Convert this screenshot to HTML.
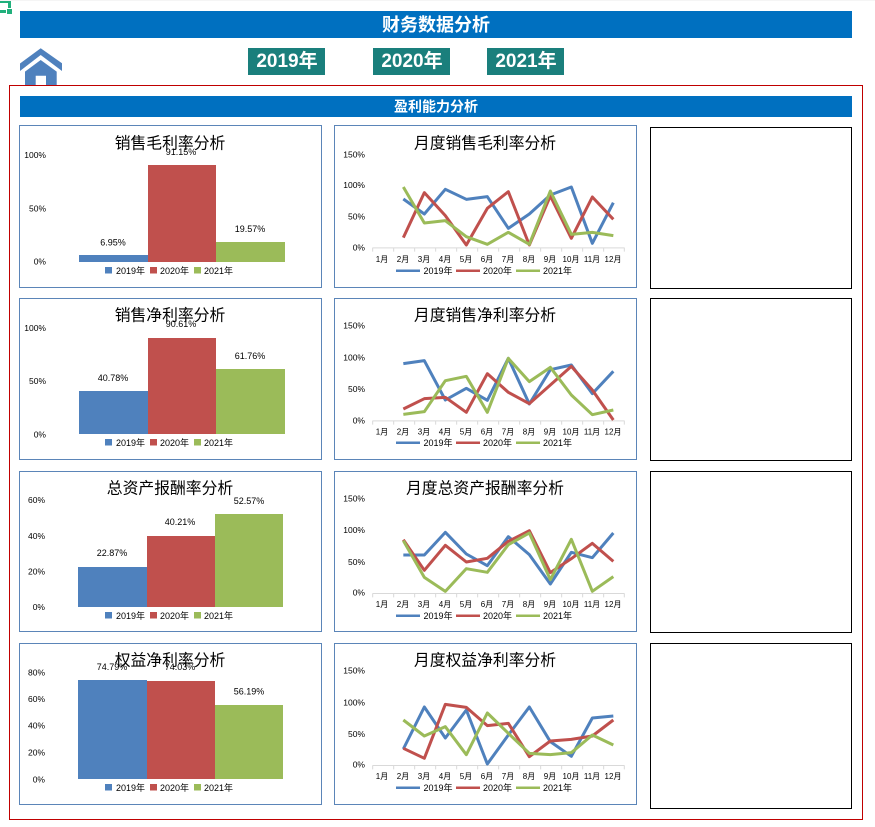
<!DOCTYPE html>
<html lang="zh">
<head>
<meta charset="utf-8">
<title>财务数据分析</title>
<style>
html,body{margin:0;padding:0;background:#fff;width:875px;height:827px;overflow:hidden}
svg{display:block;position:absolute;left:0;top:0}
text{font-family:"Liberation Sans","Noto Sans CJK SC",sans-serif;fill:#000}
.a{font-size:8.5px;text-anchor:end;dominant-baseline:central}
.c{font-size:9px;text-anchor:middle;dominant-baseline:central}
.m{font-size:8px;text-anchor:middle;dominant-baseline:central}
.l{font-size:9px;dominant-baseline:central}
.t{font-size:15.8px;text-anchor:middle;dominant-baseline:central}
.w{fill:#fff;font-weight:bold;text-anchor:middle;dominant-baseline:central}
.box{fill:none;stroke:#5b85b8;stroke-width:1}
.blk{fill:none;stroke:#000;stroke-width:1}
.p{fill:none;stroke-width:9;stroke-linejoin:round;stroke-linecap:butt}
.ax{fill:none;stroke:#d9d9d9;stroke-width:1}
</style>
</head>
<body>
<svg width="875" height="827" viewBox="0 0 875 827" xmlns="http://www.w3.org/2000/svg">
<rect x="0" y="0" width="875" height="1" fill="#f5f5f5"/>
<!-- corner mark -->
<rect x="0" y="1" width="11" height="2" fill="#21b07c"/>
<rect x="8" y="1" width="3" height="7" fill="#21b07c"/>
<rect x="0" y="10" width="6" height="3" fill="#21b07c"/>
<rect x="7" y="9" width="5" height="5" fill="#21b07c"/>

<!-- header -->
<rect x="20" y="11" width="832" height="27" fill="#0070c0"/>
<text class="w" x="436" y="25" style="font-size:18px">财务数据分析</text>

<!-- home -->
<path d="M40.7 48.300 L62 63.300 L62 71 L40.700 55 L20 71 L20 63.500 Z" fill="#4f81bd"/>
<path d="M25 71.600 L40.700 60 L56.700 71.600 L56.700 86 L46 86 L46 75.700 L35.700 75.700 L35.700 86 L25 86 Z" fill="#4f81bd"/>

<!-- year buttons -->
<rect x="248" y="48" width="77" height="27" fill="#1a7f7c"/>
<text class="w" x="287" y="61.500" style="font-size:19px">2019年</text>
<rect x="373" y="48" width="77" height="27" fill="#1a7f7c"/>
<text class="w" x="412" y="61.500" style="font-size:19px">2020年</text>
<rect x="487" y="48" width="77" height="27" fill="#1a7f7c"/>
<text class="w" x="526" y="61.500" style="font-size:19px">2021年</text>

<!-- outer red frame -->
<rect x="9.500" y="85.500" width="853" height="734" fill="none" stroke="#c00000" stroke-width="1"/>
<rect x="20" y="96" width="832" height="21" fill="#0070c0"/>
<text class="w" x="436" y="106.500" style="font-size:14px">盈利能力分析</text>

<!-- chart frames -->
<rect class="box" x="19.500" y="125.500" width="302" height="162"/>
<rect class="box" x="19.500" y="298.500" width="302" height="161"/>
<rect class="box" x="19.500" y="471.500" width="302" height="160"/>
<rect class="box" x="19.500" y="643.500" width="302" height="161"/>
<rect class="box" x="334.500" y="125.500" width="302" height="162"/>
<rect class="box" x="334.500" y="298.500" width="302" height="161"/>
<rect class="box" x="334.500" y="471.500" width="302" height="160"/>
<rect class="box" x="334.500" y="643.500" width="302" height="161"/>
<rect class="blk" x="650.500" y="127.500" width="201" height="161"/>
<rect class="blk" x="650.500" y="298.500" width="201" height="162"/>
<rect class="blk" x="650.500" y="471.500" width="201" height="161"/>
<rect class="blk" x="650.500" y="643.500" width="201" height="165"/>

<!-- BAR 1 -->
<rect x="79" y="255" width="69" height="7" fill="#4f81bd"/>
<rect x="148" y="165" width="68" height="97" fill="#c0504d"/>
<rect x="216" y="242" width="69" height="20" fill="#9bbb59"/>
<text class="t" x="170" y="144">销售毛利率分析</text>
<text class="a" x="46" y="155">100%</text>
<text class="a" x="46" y="208.500">50%</text>
<text class="a" x="46" y="261.500">0%</text>
<text class="c" x="113" y="242.500">6.95%</text>
<text class="c" x="181" y="152">91.15%</text>
<text class="c" x="250" y="229">19.57%</text>
<rect x="105" y="267" width="7" height="6.500" fill="#4f81bd"/><text class="l" x="116" y="271">2019年</text>
<rect x="150" y="267" width="7" height="6.500" fill="#c0504d"/><text class="l" x="160" y="271">2020年</text>
<rect x="194" y="267" width="7" height="6.500" fill="#9bbb59"/><text class="l" x="204" y="271">2021年</text>

<!-- BAR 2 -->
<rect x="79" y="391" width="69" height="43" fill="#4f81bd"/>
<rect x="148" y="338" width="68" height="96" fill="#c0504d"/>
<rect x="216" y="369" width="69" height="65" fill="#9bbb59"/>
<text class="t" x="170" y="316">销售净利率分析</text>
<text class="a" x="46" y="328">100%</text>
<text class="a" x="46" y="381">50%</text>
<text class="a" x="46" y="434.500">0%</text>
<text class="c" x="113" y="378">40.78%</text>
<text class="c" x="181" y="324">90.61%</text>
<text class="c" x="250" y="356">61.76%</text>
<rect x="105" y="439" width="7" height="6.500" fill="#4f81bd"/><text class="l" x="116" y="443">2019年</text>
<rect x="150" y="439" width="7" height="6.500" fill="#c0504d"/><text class="l" x="160" y="443">2020年</text>
<rect x="194" y="439" width="7" height="6.500" fill="#9bbb59"/><text class="l" x="204" y="443">2021年</text>

<!-- BAR 3 -->
<rect x="78" y="567" width="69" height="40" fill="#4f81bd"/>
<rect x="147" y="536" width="68" height="71" fill="#c0504d"/>
<rect x="215" y="514" width="68" height="93" fill="#9bbb59"/>
<text class="t" x="170" y="489">总资产报酬率分析</text>
<text class="a" x="45" y="500">60%</text>
<text class="a" x="45" y="536">40%</text>
<text class="a" x="45" y="571.500">20%</text>
<text class="a" x="45" y="607">0%</text>
<text class="c" x="112" y="553">22.87%</text>
<text class="c" x="180" y="522">40.21%</text>
<text class="c" x="249" y="501">52.57%</text>
<rect x="105" y="612" width="7" height="6.500" fill="#4f81bd"/><text class="l" x="116" y="616">2019年</text>
<rect x="150" y="612" width="7" height="6.500" fill="#c0504d"/><text class="l" x="160" y="616">2020年</text>
<rect x="194" y="612" width="7" height="6.500" fill="#9bbb59"/><text class="l" x="204" y="616">2021年</text>

<!-- BAR 4 -->
<rect x="78" y="680" width="69" height="99" fill="#4f81bd"/>
<rect x="147" y="681" width="68" height="98" fill="#c0504d"/>
<rect x="215" y="705" width="68" height="74" fill="#9bbb59"/>
<text class="t" x="170" y="661">权益净利率分析</text>
<text class="a" x="45" y="672.500">80%</text>
<text class="a" x="45" y="699">60%</text>
<text class="a" x="45" y="725.500">40%</text>
<text class="a" x="45" y="752.500">20%</text>
<text class="a" x="45" y="779.500">0%</text>
<text class="c" x="112" y="667">74.79%</text>
<text class="c" x="180" y="667">74.03%</text>
<text class="c" x="249" y="691.500">56.19%</text>
<rect x="105" y="784" width="7" height="6.500" fill="#4f81bd"/><text class="l" x="116" y="788">2019年</text>
<rect x="150" y="784" width="7" height="6.500" fill="#c0504d"/><text class="l" x="160" y="788">2020年</text>
<rect x="194" y="784" width="7" height="6.500" fill="#9bbb59"/><text class="l" x="204" y="788">2021年</text>

<!-- LINE 1 -->
<g transform="translate(330,120) scale(.33333)">
<path class="ax" style="stroke-width:3" d="M128 383.500H883M128 383V395M191 383V395M254 383V395M317 383V395M380 383V395M443 383V395M506 383V395M569 383V395M632 383V395M695 383V395M758 383V395M821 383V395M883 383V395"/>
<polyline class="p" stroke="#4f81bd" points="220,237 283,282 346,208 409,238 472,230 535,325 598,282 661,225 724,201 787,370 850,248"/>
<polyline class="p" stroke="#c0504d" points="220,353 283,218 346,287 409,375 472,265 535,215 598,375 661,228 724,355 787,231 850,298"/>
<polyline class="p" stroke="#9bbb59" points="220,201 283,309 346,302 409,350 472,373 535,337 598,373 661,213 724,343 787,337 850,347"/>
</g>
<text class="t" x="485" y="144">月度销售毛利率分析</text>
<text class="a" x="365" y="154.500">150%</text>
<text class="a" x="365" y="185">100%</text>
<text class="a" x="365" y="216.500">50%</text>
<text class="a" x="365" y="247.500">0%</text>
<text class="m" y="259"><tspan x="382">1月</tspan><tspan x="403">2月</tspan><tspan x="424">3月</tspan><tspan x="445">4月</tspan><tspan x="466">5月</tspan><tspan x="487">6月</tspan><tspan x="508">7月</tspan><tspan x="529">8月</tspan><tspan x="550">9月</tspan><tspan x="571">10月</tspan><tspan x="592">11月</tspan><tspan x="613">12月</tspan></text>
<rect x="396" y="269.500" width="24" height="2.500" fill="#4f81bd"/><text class="l" x="423.500" y="271">2019年</text>
<rect x="456" y="269.500" width="24" height="2.500" fill="#c0504d"/><text class="l" x="483" y="271">2020年</text>
<rect x="516" y="269.500" width="24" height="2.500" fill="#9bbb59"/><text class="l" x="543" y="271">2021年</text>

<!-- LINE 2 -->
<g transform="translate(330,295) scale(.33333)">
<path class="ax" style="stroke-width:3" d="M128 377.500H883M128 377V389M191 377V389M254 377V389M317 377V389M380 377V389M443 377V389M506 377V389M569 377V389M632 377V389M695 377V389M758 377V389M821 377V389M883 377V389"/>
<polyline class="p" stroke="#4f81bd" points="220,206 283,197 346,315 409,280 472,316 535,190 598,327 661,224 724,210 787,296 850,229"/>
<polyline class="p" stroke="#c0504d" points="220,342 283,311 346,307 409,352 472,236 535,292 598,326 661,270 724,214 787,285 850,375"/>
<polyline class="p" stroke="#9bbb59" points="220,358 283,350 346,257 409,244 472,352 535,190 598,260 661,217 724,300 787,359 850,345"/>
</g>
<text class="t" x="485" y="316">月度销售净利率分析</text>
<text class="a" x="365" y="325.500">150%</text>
<text class="a" x="365" y="357.500">100%</text>
<text class="a" x="365" y="389">50%</text>
<text class="a" x="365" y="420.500">0%</text>
<text class="m" y="431.500"><tspan x="382">1月</tspan><tspan x="403">2月</tspan><tspan x="424">3月</tspan><tspan x="445">4月</tspan><tspan x="466">5月</tspan><tspan x="487">6月</tspan><tspan x="508">7月</tspan><tspan x="529">8月</tspan><tspan x="550">9月</tspan><tspan x="571">10月</tspan><tspan x="592">11月</tspan><tspan x="613">12月</tspan></text>
<rect x="396" y="441.500" width="24" height="2.500" fill="#4f81bd"/><text class="l" x="423.500" y="443">2019年</text>
<rect x="456" y="441.500" width="24" height="2.500" fill="#c0504d"/><text class="l" x="483" y="443">2020年</text>
<rect x="516" y="441.500" width="24" height="2.500" fill="#9bbb59"/><text class="l" x="543" y="443">2021年</text>

<!-- LINE 3 -->
<g transform="translate(330,468) scale(.33333)">
<path class="ax" style="stroke-width:3" d="M128 376.500H883M128 376V388M191 376V388M254 376V388M317 376V388M380 376V388M443 376V388M506 376V388M569 376V388M632 376V388M695 376V388M758 376V388M821 376V388M883 376V388"/>
<polyline class="p" stroke="#4f81bd" points="220,261 283,261 346,193 409,258 472,293 535,206 598,260 661,348 724,253 787,269 850,195"/>
<polyline class="p" stroke="#c0504d" points="220,215 283,307 346,232 409,282 472,271 535,220 598,188 661,314 724,272 787,226 850,280"/>
<polyline class="p" stroke="#9bbb59" points="220,218 283,328 346,370 409,302 472,313 535,230 598,195 661,335 724,214 787,370 850,326"/>
</g>
<text class="t" x="485" y="489">月度总资产报酬率分析</text>
<text class="a" x="365" y="498.500">150%</text>
<text class="a" x="365" y="530">100%</text>
<text class="a" x="365" y="562">50%</text>
<text class="a" x="365" y="592.500">0%</text>
<text class="m" y="604"><tspan x="382">1月</tspan><tspan x="403">2月</tspan><tspan x="424">3月</tspan><tspan x="445">4月</tspan><tspan x="466">5月</tspan><tspan x="487">6月</tspan><tspan x="508">7月</tspan><tspan x="529">8月</tspan><tspan x="550">9月</tspan><tspan x="571">10月</tspan><tspan x="592">11月</tspan><tspan x="613">12月</tspan></text>
<rect x="396" y="614.500" width="24" height="2.500" fill="#4f81bd"/><text class="l" x="423.500" y="616">2019年</text>
<rect x="456" y="614.500" width="24" height="2.500" fill="#c0504d"/><text class="l" x="483" y="616">2020年</text>
<rect x="516" y="614.500" width="24" height="2.500" fill="#9bbb59"/><text class="l" x="543" y="616">2021年</text>

<!-- LINE 4 -->
<g transform="translate(330,640) scale(.33333)">
<path class="ax" style="stroke-width:3" d="M128 376.500H883M128 376V388M191 376V388M254 376V388M317 376V388M380 376V388M443 376V388M506 376V388M569 376V388M632 376V388M695 376V388M758 376V388M821 376V388M883 376V388"/>
<polyline class="p" stroke="#4f81bd" points="220,327 283,201 346,294 409,210 472,372 535,285 598,201 661,305 724,349 787,234 850,228"/>
<polyline class="p" stroke="#c0504d" points="220,325 283,355 346,193 409,202 472,257 535,250 598,350 661,303 724,298 787,288 850,240"/>
<polyline class="p" stroke="#9bbb59" points="220,240 283,288 346,260 409,344 472,219 535,280 598,340 661,344 724,338 787,285 850,315"/>
</g>
<text class="t" x="485" y="661">月度权益净利率分析</text>
<text class="a" x="365" y="670.500">150%</text>
<text class="a" x="365" y="702.500">100%</text>
<text class="a" x="365" y="734">50%</text>
<text class="a" x="365" y="764.500">0%</text>
<text class="m" y="776"><tspan x="382">1月</tspan><tspan x="403">2月</tspan><tspan x="424">3月</tspan><tspan x="445">4月</tspan><tspan x="466">5月</tspan><tspan x="487">6月</tspan><tspan x="508">7月</tspan><tspan x="529">8月</tspan><tspan x="550">9月</tspan><tspan x="571">10月</tspan><tspan x="592">11月</tspan><tspan x="613">12月</tspan></text>
<rect x="396" y="786.500" width="24" height="2.500" fill="#4f81bd"/><text class="l" x="423.500" y="788">2019年</text>
<rect x="456" y="786.500" width="24" height="2.500" fill="#c0504d"/><text class="l" x="483" y="788">2020年</text>
<rect x="516" y="786.500" width="24" height="2.500" fill="#9bbb59"/><text class="l" x="543" y="788">2021年</text>
</svg>
</body>
</html>
